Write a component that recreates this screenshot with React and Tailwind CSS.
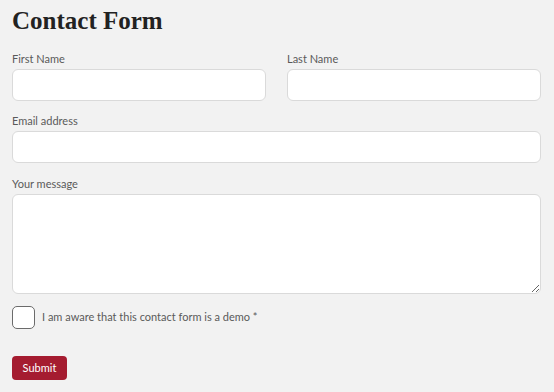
import React from 'react';

const labelCls = "block text-[11px] leading-[14px] text-[#5a5a5a] mb-[3px]";
const inputCls = "block w-full h-[32px] bg-white border border-[#dadada] rounded-[6px] px-2 text-[13px] outline-none";

const App = () => {
    return (
        <div className="min-h-screen bg-[#f2f2f2] pl-3 pr-[13px] pt-[5px]" style={{ fontFamily: 'Lato, "Open Sans", sans-serif' }}>
            <h1 className="text-[25px] leading-[31px] font-bold text-[#222]" style={{ fontFamily: '"Liberation Serif", serif' }}>Contact Form</h1>
            <form className="mt-4" onSubmit={(e) => e.preventDefault()}>
                <div className="grid grid-cols-2 gap-x-[21px]">
                    <div>
                        <label className={labelCls}>First Name</label>
                        <input type="text" className={inputCls} />
                    </div>
                    <div>
                        <label className={labelCls}>Last Name</label>
                        <input type="text" className={inputCls} />
                    </div>
                </div>
                <div className="mt-[13px]">
                    <label className={labelCls}>Email address</label>
                    <input type="email" className={inputCls} />
                </div>
                <div className="mt-[14px]">
                    <label className={labelCls}>Your message</label>
                    <textarea className="block w-full h-[100px] bg-white border border-[#dadada] rounded-[6px] px-2 py-1 text-[13px] outline-none"></textarea>
                </div>
                <div className="mt-3 flex items-center">
                    <input type="checkbox" className="appearance-none w-[23px] h-[23px] bg-white border border-[#6b6b6b] rounded-[5px]" />
                    <span className="ml-[7px] text-[11px] text-[#5a5a5a]">I am aware that this contact form is a demo *</span>
                </div>
                <button type="submit" className="mt-[27px] h-[24px] w-[55px] bg-[#a51c30] text-white text-[11px] rounded-[4px]">Submit</button>
            </form>
        </div>
    );
};

export default App;
